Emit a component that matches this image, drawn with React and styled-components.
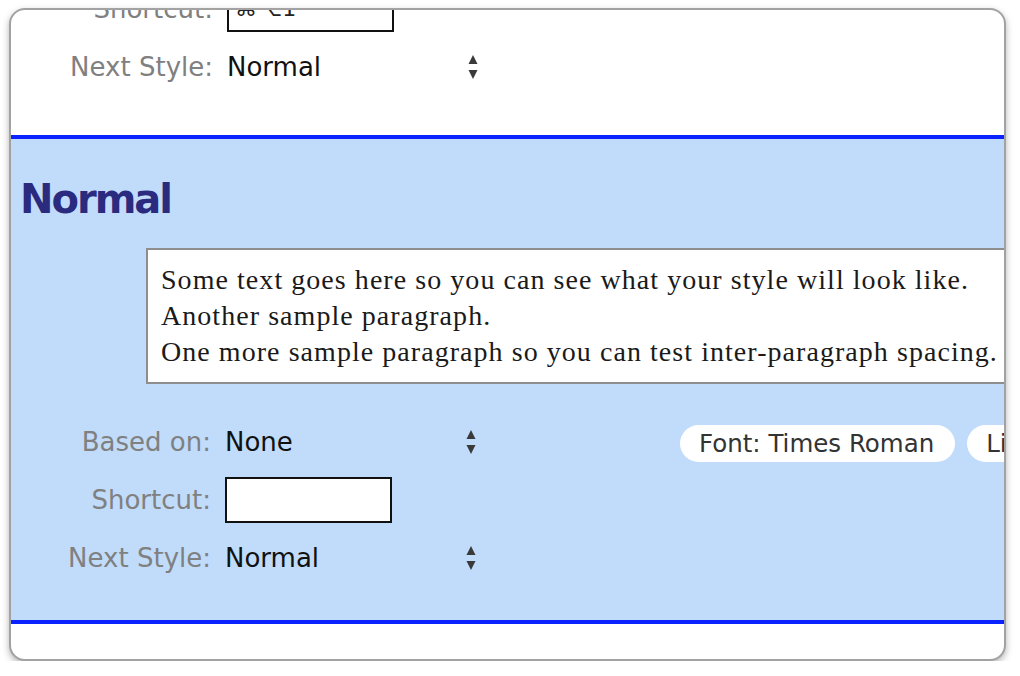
import React from 'react';
import styled, { createGlobalStyle } from 'styled-components';

const GlobalStyle = createGlobalStyle`
  body {
    margin: 0;
    background: #ffffff;
    font-family: "DejaVu Sans", Verdana, sans-serif;
  }
`

const Window = styled.div`
  box-sizing: border-box;
  margin: 8px 0 0 9px;
  width: 997px;
  height: 653px;
  border: 2px solid #a2a2a2;
  border-radius: 16px;
  overflow: hidden;
  background: #fff;
  box-shadow: 0 3px 7px rgba(0, 0, 0, 0.3);
`

// content is scrolled, first row sits half above the frame
const Scrolled = styled.div`
  margin-top: -24px;
`

const TopPanel = styled.section`
  padding-bottom: 45px;
`

const StyleForm = styled.div`
  display: grid;
  grid-template-columns: 200px 255px;
  grid-auto-rows: 46px;
  column-gap: 14px;
  row-gap: 12px;
  align-items: center;
  padding-left: ${p => p.$indent || 0}px;
  flex-shrink: 0;
`

const Label = styled.span`
  text-align: right;
  font-size: 26px;
  color: #808080;
  white-space: nowrap;
`

const Select = styled.div`
  display: flex;
  align-items: center;
  justify-content: space-between;
  padding-right: 4px;
  font-size: 26px;
  color: #111;
`

const ShortcutBox = styled.div`
  box-sizing: border-box;
  width: 167px;
  height: 46px;
  border: 2px solid #111;
  background: #fff;
  padding: 2px 6px;
  font-size: 22px;
  line-height: 38px;
  color: #222;
`

const StyleBlock = styled.section`
  background: #c0dcfa;
  border-top: 4px solid #0a22ff;
  border-bottom: 4px solid #0a22ff;
  padding: 40px 0 39px;
  overflow: hidden;
`

const Heading = styled.h2`
  margin: 0 0 0 9px;
  font-size: 40px;
  line-height: 41px;
  font-weight: bold;
  letter-spacing: -2px;
  color: #2a2a7e;
`

const Sample = styled.div`
  box-sizing: border-box;
  margin: 28px 0 0 135px;
  width: 900px;
  border: 2px solid #8e8e8e;
  background: #fff;
  padding: 12px 0 12px 13px;
  font-family: "Liberation Serif", "Times New Roman", serif;
  font-size: 28px;
  letter-spacing: 1.05px;
  line-height: 36px;
  color: #1a1a1a;
  white-space: nowrap;

  p {
    margin: 0;
  }
`

const Lower = styled.div`
  display: flex;
  align-items: flex-start;
  margin-top: 35px;
`

const Pills = styled.div`
  display: flex;
  gap: 12px;
  margin: 6px 0 0 200px;
  flex-shrink: 0;
`

const Pill = styled.span`
  height: 37px;
  padding: 0 21px 0 19px;
  border-radius: 19px;
  background: #fff;
  font-size: 24.5px;
  line-height: 37px;
  color: #333;
  white-space: nowrap;
`

function Stepper() {
  return (
    <svg width="10" height="26" viewBox="0 0 10 26">
      <polygon points="5,1 9.5,10 0.5,10" fill="#3a3a3a" />
      <polygon points="0.5,16 9.5,16 5,25" fill="#3a3a3a" />
    </svg>
  );
}

function PopUp({ value }) {
  return (
    <Select>
      <span>{value}</span>
      <Stepper />
    </Select>
  );
}

function App() {
  return (
    <>
      <GlobalStyle />
      <Window>
        <Scrolled>
          <TopPanel>
            <StyleForm $indent={2}>
              <Label>Shortcut:</Label>
              <ShortcutBox>⌘⌥1</ShortcutBox>
              <Label>Next Style:</Label>
              <PopUp value="Normal" />
            </StyleForm>
          </TopPanel>

          <StyleBlock>
            <Heading>Normal</Heading>
            <Sample>
              <p>Some text goes here so you can see what your style will look like.</p>
              <p>Another sample paragraph.</p>
              <p>One more sample paragraph so you can test inter-paragraph spacing.</p>
            </Sample>
            <Lower>
              <StyleForm>
                <Label>Based on:</Label>
                <PopUp value="None" />
                <Label>Shortcut:</Label>
                <ShortcutBox />
                <Label>Next Style:</Label>
                <PopUp value="Normal" />
              </StyleForm>
              <Pills>
                <Pill>Font: Times Roman</Pill>
                <Pill>Line Spacing: Single</Pill>
              </Pills>
            </Lower>
          </StyleBlock>
        </Scrolled>
      </Window>
    </>
  );
}

export default App
